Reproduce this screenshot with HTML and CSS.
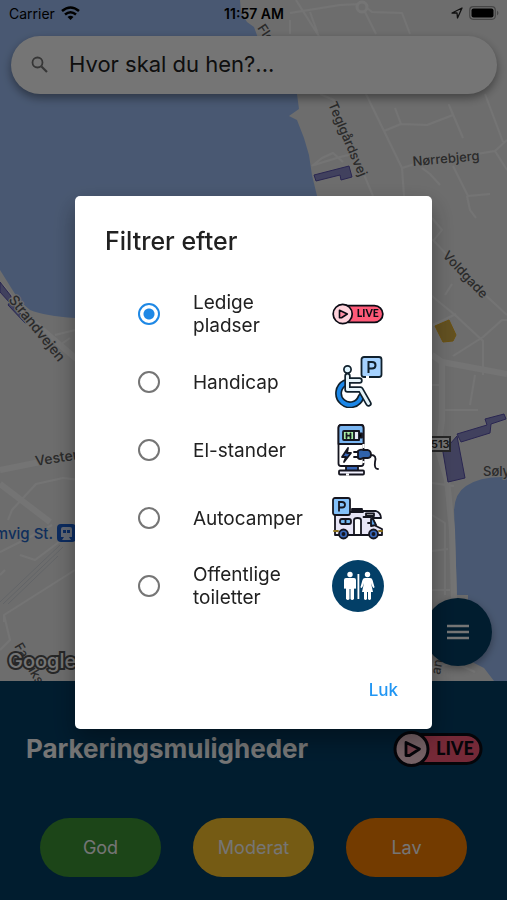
FILE: index.html
```html
<!DOCTYPE html>
<html lang="da">
<head>
<meta charset="utf-8">
<meta name="viewport" content="width=device-width, initial-scale=1">
<title>Parkering</title>
<link rel="stylesheet" href="styles.css">
</head>
<body>
<div class="app">
  <main class="map">
    <svg class="map-canvas" viewBox="0 0 507 681" preserveAspectRatio="xMidYMid slice" aria-hidden="true">
      <rect width="507" height="681" fill="#eeeeee"/>
      <g fill="#a0c1f8">
        <path d="M0 0H240L241 12L247 22L254 27L258 38Q285 65 297 94L299 109L289 116L297 120L304 138L309 155L312 175L318 200V318H75Q45 316 30 310Q20 302 15 294L0 270Z"/>
        <path d="M507 477Q480 476 466 486Q455 493 454 510L457 595H468V660L484 668L494 681H507Z"/>
      </g>
      <g class="roads">
        <path d="M290 13L340 5L362 4L372 12L402 13L410 34M296 0L320 38M365 12L376 34M290 20V34M310 12L318 34" />
        <path d="M366 94L402 168L404 196M320 94L334 100L360 165L373 196M402 168L415 164L495 151L507 140M495 151L507 170M384 131L401 124L427 125L453 115L449 105L463 138M401 124L395 108M485 94L503 142M453 166L468 196L490 194M422 168L430 174L440 185M312 166L322 158L333 153L343 162M314 165L340 157L353 154" />
        <path d="M427 292L455 315L483 341V375M433 325L456 314M445 295L452 284M453 356L483 337L502 320H507M427 238L433 240L480 290L507 315M432 218L442 230L434 240M475 375L470 405M442 410H478M467 196L470 210L476 218M432 385H440"/>
        <path d="M80 480L63 478L36 484L12 510L8 520M0 552L28 538L52 525M20 555L35 560L75 530M75 570L4 615L10 640L0 650M4 615V622M0 575L5 570M55 335L75 330M60 345L70 338"/>
        <path d="M432 483L454 486M432 515L445 523V595M432 551L448 549M432 590H450M432 668L455 663L475 672"/>
      </g>
      <g class="roads roads-wide">
        <path d="M0 470L45 461L80 455M0 484L50 522M432 355L442 362L507 374M442 362V420L438 450L447 480L452 530L454 600M0 285L25 315L80 362"/>
      </g>
      <circle cx="362" cy="7" r="5" fill="#eeeeee" stroke="#fff" stroke-width="3"/>
      <g class="rails"><path d="M0 602L60 545M3 604L63 547M8 604L58 556"/></g>
      <path d="M435 326L449 320L456 335L453 341L443 342Z" fill="#d7b048" stroke="#e8b022"/>
      <g class="zones">
        <path d="M314 175L349 166L352 177L341 180L340 175L316 181Z"/>
        <path d="M443 452L457 436L465 478L448 482Z"/>
        <path d="M457 434L487 425L485 419L504 414L506 419L491 424L490 433L461 442Z"/>
        <path d="M0 282L11 296L10 303L0 292ZM10 302L28 322L25 323L8 305Z"/>
      </g>
      <g class="labels">
        <text transform="translate(257 28) rotate(56)">Fløjvej</text>
        <text transform="translate(328 104) rotate(67)">Teglgårdsvej</text>
        <text transform="translate(413 166) rotate(-5)">Nørrebjerg</text>
        <text transform="translate(442 256) rotate(47)">Voldgade</text>
        <text class="label-big" transform="translate(8 300) rotate(51)">Strandvejen</text>
        <text class="label-big" transform="translate(36 466) rotate(-9)">Vesterbrogade</text>
        <text transform="translate(483 476)">Sølystvej</text>
        <text transform="translate(440 675) rotate(-80)">and</text>
        <text transform="translate(14 646) rotate(60)">Fabriksvej</text>
        <text class="label-station" x="53" y="539" text-anchor="end">Lemvig St.</text>
      </g>
      <rect x="422" y="437" width="28" height="14" fill="#fff" stroke="#555" stroke-width="2"/>
      <text class="road-number" x="431" y="448">513</text>
      <g>
        <rect x="57" y="524" width="19" height="18" rx="4" fill="#1a5fd0"/>
        <path d="M61 529Q61 527 63 527H70Q72 527 72 529V537H69L71 540H62L64 537H61Z" fill="#d8e4fa"/>
        <path d="M63 530H66V533H63ZM67 530H70V533H67Z" fill="#1a5fd0"/>
      </g>
      <text class="google" x="8" y="668">Google</text>
    </svg>

    <header class="status">
      <span class="carrier">Carrier
        <svg width="19" height="15" viewBox="0 0 19 15" aria-hidden="true"><g fill="none" stroke="#000" stroke-width="2.600"><path d="M1 5Q9.500-2 18 5"/><path d="M4 8.500Q9.500 4 15 8.500"/></g><path d="M6.500 11Q9.500 8.500 12.500 11L9.500 14Z"/></svg>
      </span>
      <time class="clock">11:57 AM</time>
      <span class="power">
        <svg width="12" height="12" viewBox="0 0 12 12" aria-hidden="true"><path d="M1 6L11 1L6.500 11L6 6Z" fill="none" stroke="#222" stroke-width="1.300" stroke-linejoin="round"/></svg>
        <svg width="30" height="14" viewBox="0 0 30 14" aria-hidden="true"><rect x=".7" y=".7" width="25.600" height="12.600" rx="3.500" fill="none" stroke="#999" stroke-width="1.200"/><rect x="2.500" y="2.500" width="22" height="9" rx="2"/><path d="M28 4.500Q31 7 28 9.500Z" fill="#999"/></svg>
      </span>
    </header>

    <label class="search">
      <svg width="18" height="18" viewBox="0 0 18 18" aria-hidden="true"><circle cx="6.500" cy="6.500" r="5" fill="none" stroke="#777" stroke-width="1.800"/><path d="M10.500 10.500L16 16" stroke="#777" stroke-width="2.200"/></svg>
      <input type="text" placeholder="Hvor skal du hen?..." aria-label="Hvor skal du hen?">
    </label>

    <button class="fab" type="button" aria-label="Menu">
      <svg width="24" height="18" viewBox="0 0 24 18" aria-hidden="true"><path d="M1 3H23M1 9H23M1 15H23" stroke="#fff" stroke-width="2.500"/></svg>
    </button>
  </main>

  <section class="panel">
    <div class="panel-head">
      <h2>Parkeringsmuligheder</h2>
      <svg class="live-large" viewBox="0 0 90 36" aria-label="Live">
        <rect x="8" y="3.500" width="80" height="29" rx="14.500" fill="#ff5a78" stroke="#0b0b14" stroke-width="3"/>
        <circle cx="18.500" cy="18" r="16.500" fill="#ffd3dc" stroke="#0b0b14" stroke-width="3"/>
        <path d="M13 22V11.500l13.500 6.500-10 6.500h-3.500v-2" fill="#ff8fa5" stroke="#0b0b14" stroke-width="2.800" stroke-linecap="round" stroke-linejoin="round"/>
        <text class="live-text" x="43" y="24">LIVE</text>
      </svg>
    </div>
    <div class="levels">
      <button class="level good" type="button">God</button>
      <button class="level moderate" type="button">Moderat</button>
      <button class="level low" type="button">Lav</button>
    </div>
  </section>
</div>

<div class="backdrop">
  <form class="dialog" role="dialog" aria-labelledby="dialog-title">
    <h1 id="dialog-title">Filtrer efter</h1>
    <div class="options">
      <label class="option">
        <input type="radio" name="filter" checked>
        <span>Ledige pladser</span>
        <svg viewBox="0 0 90 36" aria-hidden="true">
          <rect x="8" y="3.500" width="80" height="29" rx="14.500" fill="#ff5a78" stroke="#0b0b14" stroke-width="3"/>
          <circle cx="18.500" cy="18" r="16.500" fill="#ffd3dc" stroke="#0b0b14" stroke-width="3"/>
          <path d="M13 22V11.500l13.500 6.500-10 6.500h-3.500v-2" fill="#ff8fa5" stroke="#0b0b14" stroke-width="2.800" stroke-linecap="round" stroke-linejoin="round"/>
          <text class="live-text" x="43" y="24">LIVE</text>
        </svg>
      </label>
      <label class="option">
        <input type="radio" name="filter">
        <span>Handicap</span>
        <svg viewBox="0 0 52 52" aria-hidden="true">
          <rect x="29.500" y="1" width="20" height="20" rx="2.500" fill="#a5d2ff" stroke="#10202c" stroke-width="1.800"/>
          <path d="M34 21H37" stroke="#fff" stroke-width="2.200"/>
          <path d="M36.500 17V6H40Q43.500 6 43.500 9.200T40 12.400H37" fill="none" stroke="#10202c" stroke-width="2"/>
          <g fill="none" stroke-linecap="round" stroke-linejoin="round">
            <path d="M13 27A11.500 11.500 0 1 0 29 41" stroke="#10202c" stroke-width="7"/>
            <path d="M13 27A11.500 11.500 0 1 0 29 41" stroke="#1b87e8" stroke-width="3.800"/>
            <path d="M15.500 20V33.500H28.500L36.500 47.500M15.500 24.500H27.500" stroke="#10202c" stroke-width="6.400"/>
            <path d="M15.500 20V33.500H28.500L36.500 47.500M15.500 24.500H27.500" stroke="#e6f4fa" stroke-width="3"/>
          </g>
          <circle cx="15.500" cy="13.500" r="3.600" fill="#dff5ff" stroke="#10202c" stroke-width="1.700"/>
        </svg>
      </label>
      <label class="option">
        <input type="radio" name="filter">
        <span>El-stander</span>
        <svg viewBox="0 0 52 52" aria-hidden="true">
          <g stroke="#15151f" stroke-width="1.800" stroke-linejoin="round" stroke-linecap="round">
            <path d="M14 42H26V47H14Z" fill="#3866b5"/>
            <rect x="6.500" y="1" width="25" height="41" rx="2.500" fill="#fff"/>
            <path d="M6.500 20V4Q6.500 1 9 1H29Q31.500 1 31.500 4V20Z" fill="#7ab6f2"/>
            <rect x="11" y="7" width="16" height="9" rx="1" fill="#a9eda4"/>
            <path d="M22 7H27V16H22Z" fill="#e8e8f5"/>
            <path d="M27.500 9.500H30V13.500H27.500M14.500 9.500V14M14.500 11.700H18.500M18.500 9.500V14"/>
            <path d="M16 24L10 33H14L12 38L19 29H15Z" fill="#3866b5"/>
            <path d="M22 28H26M22 33H26"/>
            <path d="M26 27Q28 25 31 26H36Q39 27 39 30.500T36 34H31Q28 36 26 34Z" fill="#2f62ac"/>
            <path d="M39 31Q45 31 43 38Q42 45 46 45" fill="none"/>
            <rect x="7" y="46.500" width="25" height="4" rx="1" fill="#f1f1ff"/>
          </g>
          <path d="M14 50.500H17" stroke="#fff" stroke-width="2.200"/>
          <path d="M31.500 20V24M31.500 37V39" stroke="#fff" stroke-width="2.200"/>
        </svg>
      </label>
      <label class="option">
        <input type="radio" name="filter">
        <span>Autocamper</span>
        <svg viewBox="0 -5 52 52" aria-hidden="true">
          <g stroke="#15151f" stroke-width="1.800" stroke-linejoin="round" stroke-linecap="round">
            <path d="M3 38V15H31V14H44Q49 16 49 21H40L44 29L50 32V38Z" fill="#e7e5f6"/>
            <path d="M39 22H41L44 28L39 29Z" fill="#5b9de0"/>
            <path d="M34 16.500H42V19H34Z" fill="#fff"/>
            <path d="M20 14V12H30V14Z" fill="#b8b8cc"/>
            <rect x="1" y="1" width="17" height="17" rx="2" fill="#84c1fa"/>
            <rect x="8" y="22" width="11" height="5" rx="2" fill="#74b8ef"/>
            <path d="M13.500 22V27" fill="none"/>
            <path d="M22 37V23Q22 21 25.500 21T29 23V37" fill="#fff"/>
            <path d="M2 34H6M47 34H50" stroke="#8b701b"/>
            <path d="M18 38H35M31.500 20H39M36 26H38"/>
            <circle cx="11.500" cy="37" r="4.500" fill="#3866b5"/><circle cx="41.500" cy="37" r="4.500" fill="#3866b5"/>
            <circle cx="11.500" cy="37" r="1"/><circle cx="41.500" cy="37" r="1"/>
          </g>
          <path d="M7 14.500V5H10Q13 5 13 7.700T10 10.500H7" fill="none" stroke="#15151f" stroke-width="1.800"/>
        </svg>
      </label>
      <label class="option">
        <input type="radio" name="filter">
        <span>Offentlige toiletter</span>
        <svg viewBox="0 0 52 52" aria-hidden="true">
          <circle cx="26" cy="26" r="26" fill="#033f67"/>
          <g fill="#fff">
            <circle cx="18" cy="14.500" r="2.700"/><circle cx="35.500" cy="14.500" r="2.700"/>
            <path d="M14 18H22Q24 18 24 20V28Q23 30 22 28V39Q20 41 18.500 39V29H17.500V39Q16 41 14 39V28Q13 30 12 28V20Q12 18 14 18Z"/>
            <rect x="25.500" y="14" width="1.800" height="25"/>
            <path d="M33 18H38Q40 18 40.500 20L42.500 27Q42 29 40.500 27L39 23L41 32H39V39Q37.500 41 36 39V32H35V39Q33.500 41 32 39V32H30L32 23L30.500 27Q29 29 28.500 27L30.500 20Q31 18 33 18Z"/>
          </g>
        </svg>
      </label>
    </div>
    <div class="actions"><button class="close" type="button">Luk</button></div>
  </form>
</div>
</body>
</html>
```
FILE: styles.css
```css
* { box-sizing: border-box; }

body {
  margin: 0;
  font-family: Inter, "Liberation Sans", sans-serif;
  color: #212121;
}

button, input { font: inherit; }

button {
  border: 0;
  padding: 0;
}

h1, h2 { margin: 0; }

.live-text {
  font: 900 18px Lato, sans-serif;
  fill: #0b0b14;
}

.app {
  display: flex;
  flex-direction: column;
  min-height: 100vh;
}

/* Map */
.map {
  position: relative;
  flex: 1;
  overflow: hidden;
}

.map-canvas {
  position: absolute;
  inset: 0;
  width: 100%;
  height: 100%;
}

.roads {
  fill: none;
  stroke: #fdfdfd;
  stroke-width: 2;
  stroke-linejoin: round;
}

.roads-wide { stroke-width: 6; }

.rails {
  fill: none;
  stroke: #d5dae0;
  stroke-width: 1;
}

.zones {
  fill: #8f8fcc;
  stroke: #5a52b0;
  stroke-width: 1;
}

.labels {
  font-size: 13px;
  font-weight: 500;
  fill: #5c5c5c;
  stroke: #eeeeee;
  stroke-width: 2;
  paint-order: stroke;
}

.label-big { font-size: 14px; }

.label-station {
  font-size: 15px;
  fill: #2467c9;
}

.road-number {
  font-size: 11px;
  font-weight: 600;
  fill: #333;
}

.google {
  font-size: 20px;
  font-weight: 500;
  fill: #fff;
  stroke: #555;
  stroke-width: 4;
  paint-order: stroke;
}

.status {
  position: relative;
  display: grid;
  grid-template-columns: 1fr auto 1fr;
  align-items: center;
  height: 26px;
  padding: 0 8px 0 9px;
  font-size: 14px;
  color: #000;
}

.carrier, .power {
  display: flex;
  align-items: center;
  gap: 6px;
}

.power { justify-content: flex-end; }

.clock { font-weight: 600; }

.search {
  position: relative;
  display: flex;
  align-items: center;
  gap: 20px;
  height: 58px;
  margin: 10px 10px 0 11px;
  padding: 0 20px;
  border-radius: 29px;
  background: #fff;
  box-shadow: 0 4px 10px rgba(0, 0, 0, .4);
}

.search input {
  flex: 1;
  min-width: 0;
  border: 0;
  padding: 0 0 2px;
  background: none;
  outline: 0;
  font-size: 22px;
}

.search input::placeholder {
  color: #212121;
  opacity: 1;
}

.fab {
  position: absolute;
  right: 15px;
  bottom: 15px;
  display: grid;
  place-items: center;
  width: 68px;
  height: 68px;
  border-radius: 50%;
  background: #033f67;
  box-shadow: 0 3px 8px rgba(0, 0, 0, .35);
}

/* Bottom panel */
.panel {
  padding: 50px 0 23px;
  background: #033f67;
  color: #fff;
}

.panel-head {
  display: flex;
  align-items: center;
  justify-content: space-between;
  padding: 0 24px 0 26px;
}

.panel h2 {
  font-size: 26px;
  font-weight: 700;
  line-height: 36px;
}

.live-large {
  width: 90px;
  height: 36px;
}

.levels {
  display: grid;
  grid-template-columns: repeat(3, 1fr);
  gap: 32px;
  margin-top: 51px;
  padding: 0 40px;
}

.level {
  height: 59px;
  border-radius: 30px;
  font-size: 18px;
  color: #fff;
}

.good { background: #3d9636; }
.moderate { background: #ffc62c; }
.low { background: #fb8000; }

/* Filter dialog */
.backdrop {
  position: fixed;
  inset: 0;
  display: grid;
  align-items: center;
  padding: 25px 75px 0;
  background: rgba(0, 0, 0, .54);
}

.dialog {
  padding: 30px 30px 15px;
  border-radius: 5px;
  background: #fff;
  box-shadow: 0 10px 24px rgba(0, 0, 0, .35);
}

.dialog h1 {
  font-size: 25px;
  font-weight: 500;
  line-height: 30px;
}

.options {
  margin-top: 24px;
  padding: 0 18px 0 33px;
}

.option {
  display: flex;
  align-items: center;
  height: 68px;
  font-size: 19px;
  line-height: 23px;
}

.option input {
  appearance: none;
  flex: none;
  width: 22px;
  height: 22px;
  margin: 0 33px 0 0;
  border: 2px solid #757575;
  border-radius: 50%;
}

.option input:checked {
  border-color: #1e88e5;
  background: radial-gradient(circle, #1e88e5 5px, transparent 6px);
}

.option span {
  flex: 1;
  padding-right: 24px;
}

.option svg {
  flex: none;
  width: 52px;
  height: 52px;
}

.actions {
  display: flex;
  justify-content: flex-end;
  margin-top: 46px;
}

.close {
  height: 48px;
  padding: 0 4px;
  background: none;
  color: #2196f3;
  font-size: 17px;
  font-weight: 500;
}
```
